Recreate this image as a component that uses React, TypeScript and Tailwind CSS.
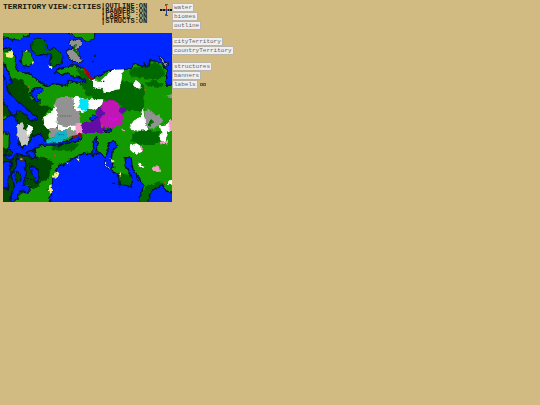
import { useState } from 'react';

const WATER = '#0026ff';
const LAND = '#129a00';
const FOREST = '#046a00';
const DARK_FOREST = '#024c02';
const SHORE = '#04123a';

const LAYER_GROUPS = [
  ['water', 'biomes', 'outline'],
  ['cityTerritory', 'countryTerritory'],
  ['structures', 'banners', 'labels'],
];

const STATUS_LINES = ['|OUTLINE:ON', '|BANNERS:ON', '|LABELS :ON', '|STRUCTS:ON'];

function Compass() {
  return (
    <svg viewBox="0 0 12 14" className="h-[14px] w-3" aria-hidden="true">
      <path d="M5 1h3v1H5zM5 2h1v1H5zM5 11h1v1H5zM5 12h3v1H5z" fill="#6b5a3a" />
      <path d="M0 6h2v2H0zM3 6h2v2H3zM8 6h1v2H8zM10 6h2v2h-2z" fill="#111" />
      <path d="M2 7h8" stroke="#222" strokeWidth="1" />
      <path d="M6.5 2v4" stroke="#c8481c" strokeWidth="1" />
      <path d="M6.5 6v6" stroke="#22408e" strokeWidth="1" />
    </svg>
  );
}

function WorldMap() {
  return (
    <svg
      viewBox="10 97 507 507"
      className="block aspect-square w-full"
      role="img"
      aria-label="Territory map"
    >
      {/* Roughens the borders so that coasts look natural */}
      <filter id="rough" filterUnits="userSpaceOnUse" x="0" y="87" width="527" height="527">
        <feTurbulence type="fractalNoise" baseFrequency="0.06" numOctaves="3" seed="4" />
        <feDisplacementMap in="SourceGraphic" scale="16" xChannelSelector="R" yChannelSelector="G" />
      </filter>

      <rect x="10" y="97" width="507" height="507" fill={LAND} />

      <g filter="url(#rough)">
        {/* Forest */}
        <g fill={DARK_FOREST}>
          <path d="M0 262L22 262L42 232L72 240L88 262L90 290L118 310L160 322L132 345L135 372L145 385L145 415L115 430L70 445L45 400L50 365L0 340z" />
          <path d="M0 440L60 450L95 470L135 472L158 485L148 530L122 552L100 562L75 550L60 590L30 614L0 614z" />
        </g>
        <g fill={FOREST}>
          <path d="M232 197L258 218L285 240L320 270L345 262L362 238L425 248L436 266L432 332L385 330L345 302L310 298L290 295L262 285L250 262L240 240z" />
          <path d="M392 210L430 192L465 184L492 205L498 228L470 236L425 232L395 230z" />
          <path d="M435 245L465 238L489 250L475 262L448 256z" />
          <path d="M395 400L430 388L478 392L480 422L455 434L420 432L395 420z" />
          <path d="M150 440L205 425L240 432L215 452L175 450z" />
          <path d="M358 515L385 522L400 535L398 566L362 552z" />
          <path d="M410 614L425 576L445 556L475 545L500 548L480 570L450 614z" />
        </g>

        {/* Seas and lakes */}
        <g fill={WATER} stroke={SHORE} strokeWidth="4" strokeLinejoin="round">
          <path d="M-10 85L530 85L530 252L500 250L502 215L496 202L488 190L470 182L450 178L448 196L438 200L430 182L432 196L404 188L394 204L372 206L340 208L315 214L282 236L262 214L244 200L232 196L205 196L180 204L165 215L185 225L200 218L220 228L242 232L258 244L230 248L210 242L195 254L172 250L150 256L120 246L110 232L85 218L50 206L46 190L48 168L35 148L-10 146z" />
          <path d="M-5 182L18 190L18 210L30 222L35 240L25 262L-5 262z" />
          <path d="M-5 202L14 226L24 266L35 285L52 300L72 315L92 335L112 348L114 362L95 358L70 338L50 328L52 345L40 345L24 325L12 300L-5 290z" />
          <path d="M92 280L105 262L128 260L130 272L110 278L114 292L122 304L108 302z" />
          <path d="M-5 352L14 356L30 342L48 350L56 370L54 400L55 425L68 442L88 430L96 404L108 400L124 402L132 418L155 426L202 422L240 402L244 412L225 424L180 432L130 434L105 440L95 465L70 466L50 462L35 478L14 468L28 440L30 400L-5 392z" />
          <path d="M-5 485L32 482L34 516L22 540L28 565L-5 560z" />
          <path d="M50 470L78 480L74 502L80 525L72 555L95 560L84 575L58 568L55 590L40 604L32 598L42 560L34 522L48 500z" />
          <path d="M100 495L116 510L118 545L105 542L94 530L88 512z" />
          <path d="M82 453L105 448L112 470L94 475z" />
          <path d="M145 620L155 582L146 565L158 550L164 520L178 498L210 480L238 465L258 458L305 460L318 475L325 506L355 521L360 551L393 561L396 536L380 500L376 472L394 474L400 506L420 536L433 556L425 575L415 620z" />
          <path d="M287 408L294 415L290 440L294 464L274 464L282 430z" />
          <path d="M324 425L344 423L354 436L338 450L334 480L345 497L330 508L316 488L322 455L330 440z" />
          <path d="M442 620L450 580L468 562L488 552L500 572L530 575L530 620z" />
        </g>

        {/* Islands in the northern sea */}
        <g stroke={SHORE} strokeWidth="3" strokeLinejoin="round">
          <path d="M96 130L112 110L138 120L145 138L150 150L166 140L180 152L190 168L182 194L160 196L148 182L158 166L130 160L112 166L98 154z" fill={FOREST} />
          <path d="M64 176L74 150L86 150L92 168L106 184L88 198L68 194z" fill={LAND} />
          <path d="M200 150L224 142L206 128L222 114L244 120L246 132L234 144L236 162L250 176L244 186L218 185L210 170z" fill="#929292" />
          <path d="M475 170L480 168L506 190L502 196z" fill="#929292" />
          <path d="M205 85L286 85L284 114L270 122L245 112L220 106z" fill={LAND} />
          <path d="M90 85L92 108L72 108L55 118L-5 110L-5 85z" fill={LAND} />
        </g>
        <path d="M222 134L232 130L228 146L238 154L232 165L220 155z" fill={FOREST} />
        <path d="M132 142L140 136L146 152L134 148z" fill={WATER} />

        {/* Forested islets of the south-west delta */}
        <g fill={DARK_FOREST} stroke={SHORE} strokeWidth="3">
          <path d="M78 500L92 485L94 515L110 530L92 542L80 530z" />
          <path d="M45 522L58 512L64 530L52 548z" />
          <path d="M18 448L40 450L36 464L20 462z" />
        </g>

        {/* Beaches */}
        <g fill="#f4f484">
          <path d="M20 154L42 150L42 164L34 172L22 168zM146 192L162 194L160 202L148 202zM76 148L82 146L84 154L78 154zM98 182L106 184L102 192z" />
          <path d="M160 530L164 516L178 512L172 528L162 536zM148 555L156 550L156 565L160 572L152 580L147 570zM200 488L208 486L204 494zM230 473L240 470L236 480zM332 470L345 482L336 486zM355 522L364 514L364 528z" />
        </g>
        <path d="M318 482L324 486L322 496L334 506L328 508L316 494z" fill="#fff" stroke={SHORE} strokeWidth="2" />

        {/* Snow */}
        <g fill="#fff">
          <path d="M272 234L286 240L300 240L320 220L345 207L370 206L366 236L360 266L345 268L330 278L312 276L302 264L282 264z" />
          <path d="M403 244L412 238L424 248L422 262L408 266L400 256z" />
          <path d="M130 350L152 336L164 318L170 300L175 345L168 385L145 384L134 370z" />
          <path d="M220 296L235 286L266 296L308 296L306 312L290 328L266 320L250 338L228 330z" />
          <path d="M390 378L402 360L422 348L430 318L434 350L446 386L425 390L395 388z" />
          <path d="M480 374L500 372L516 355L516 380L505 398L496 424L480 418L485 396z" />
          <path d="M392 436L408 427L424 436L424 450L405 460L394 450z" />
          <path d="M505 542L530 540L530 552L505 552z" />
        </g>
        <path d="M52 372L66 365L78 394L88 374L100 380L96 396L86 408L84 434L66 436L54 415z" fill="#c8c8c8" />
        <path d="M80 385L88 373L100 380L94 398L82 404z" fill="#fff" />

        {/* Stone */}
        <g fill="#929292">
          <path d="M165 306L180 290L220 288L222 320L238 338L242 366L225 378L170 380L172 345z" />
          <path d="M144 385L175 382L190 388L228 386L242 400L205 410L150 412z" />
          <path d="M434 330L445 322L456 338L478 344L488 362L472 382L450 384L436 368z" />
          <path d="M498 286L530 276L530 298z" />
        </g>
        <path d="M446 364L458 357L460 370L450 376z" fill={FOREST} />
        <path d="M172 374L200 380L225 374L226 386L195 386L172 384z" fill="#fff" />

        {/* Territories */}
        <path d="M300 320L318 308L326 330L310 340L318 384L304 397L244 397L244 368L268 364L292 348L290 335zM355 318L382 322L378 336L364 342z" fill="#640aa8" />
        <path d="M306 304L330 297L355 306L360 330L374 352L366 374L335 384L304 378L300 352L315 338L304 325z" fill="#c012b4" />
        <path d="M326 350h26v8h-26z" fill="#d408d8" />
        <path d="M242 292L256 290L268 302L266 322L246 330L236 318z" fill="#00e4fa" />
        <path d="M168 392L200 388L203 412L180 424L144 428L142 416L168 412z" fill="#08b4cc" />
        <path d="M248 198L262 208L284 234L272 236L258 222z" fill="#a8040c" />
        <path d="M218 406L246 400L244 408L225 414z" fill="#8c1010" />
        <g fill="#f49cc8">
          <path d="M228 368L246 366L246 396L232 400L224 390z" />
          <path d="M458 500L470 496L484 504L480 514L464 514zM364 384L380 386L376 398zM508 362L530 350L530 388L506 386z" />
          <path d="M480 424L504 420L506 432L496 428L484 434zM424 436L430 440L424 454z" />
        </g>
        <path d="M412 494L418 488L434 496L432 502L422 496L416 500z" fill="#fff" />
        <path d="M268 354L284 342L290 348L280 362zM308 388L334 384L336 388L324 394z" fill={WATER} stroke={SHORE} strokeWidth="3" />
      </g>

      {/* Rocks */}
      <path d="M283 162h5v7h-5zM278 180h4v5h-4zM122 160h4v5h-4zM64 150h5v4h-5zM310 240h4v4h-4zM338 546h8v4h-8z" fill={SHORE} />

      {/* Towns */}
      <path d="M84 254h7v8h-7zM162 461h7v7h-7zM433 264h7v6h-7zM304 374h7v7h-7zM492 544h7v7h-7z" fill="#94601c" />
      <path d="M58 470h16v12h-16z" fill="#40301c" />
      <path d="M62 473h6v5h-6z" fill="#d8a860" />
      <path d="M180 346h36M176 402h18M262 386h20" stroke="#333" strokeWidth="2" strokeDasharray="5 2" opacity="0.7" />
    </svg>
  );
}

export default function App() {
  const [hidden, setHidden] = useState<string[]>([]);

  const toggleLayer = (name: string) => {
    setHidden((prev) =>
      prev.includes(name) ? prev.filter((n) => n !== name) : [...prev, name]
    );
  };

  return (
    <main className="flex min-h-screen items-start bg-[#d1bb82] pt-[3px] pl-[3px] font-['Liberation_Mono',monospace]">
      <section className="w-[169px] shrink-0">
        <header className="flex h-[30px] items-start leading-[5px] font-bold whitespace-nowrap text-[#1c180e]">
          <h1 className="flex gap-0.5 pt-px text-[8px]">
            <span>TERRITORY</span>
            <span>VIEW:CITIES</span>
          </h1>
          <div className="pt-px text-[7px]">
            {STATUS_LINES.map((line) => (
              <p key={line} className="whitespace-pre">{line}</p>
            ))}
          </div>
          <div className="ml-auto">
            <Compass />
          </div>
        </header>
        <WorldMap />
      </section>

      <nav className="flex flex-col gap-[7px]" aria-label="Map layers">
        {LAYER_GROUPS.map((group) => (
          <div key={group[0]} className="flex flex-col items-start">
            {group.map((name) => (
              <div key={name} className="flex items-center gap-0.5">
                <button
                  type="button"
                  aria-pressed={!hidden.includes(name)}
                  onClick={() => toggleLayer(name)}
                  className="border border-[#b9b5aa] bg-[#efefef] px-px text-[6px] leading-[7px] text-[#666]"
                >
                  {name}
                </button>
                {name === 'labels' && (
                  <svg viewBox="0 0 6 3" className="h-[3px] w-1.5" aria-hidden="true">
                    <path d="M0 0h6v3H0z" fill="#6f6444" />
                    <path d="M1 1h1v1H1zM4 1h1v1H4z" fill="#b8a880" />
                  </svg>
                )}
              </div>
            ))}
          </div>
        ))}
      </nav>
    </main>
  );
}
